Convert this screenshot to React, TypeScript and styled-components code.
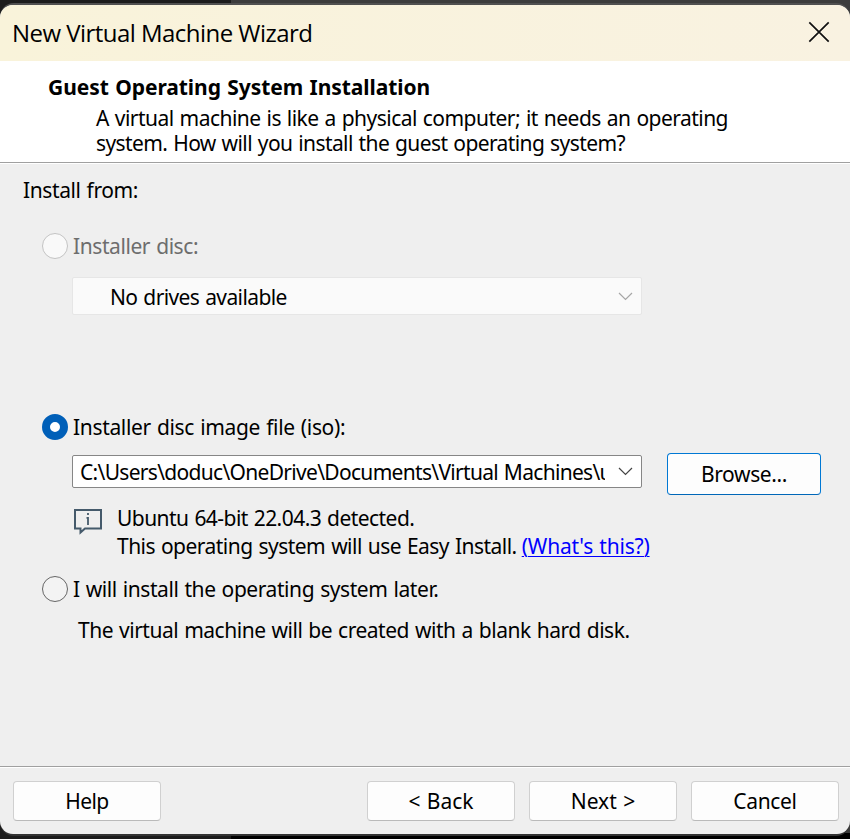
import React from "react";
import styled, { createGlobalStyle } from "styled-components";

const GlobalStyle = createGlobalStyle`
  * { box-sizing: border-box; }
  body { margin: 0; overflow: hidden; }
`;

const Desktop = styled.div`
  width: 850px;
  height: 839px;
  padding: 3px 0;
  background:
    linear-gradient(#000, #000) 231px 100% / 619px 6px no-repeat,
    linear-gradient(90deg, #1c1c1c 231px, #3c3c3c 231px);
`;

const Frame = styled.div`
  height: 833px;
  padding: 2px 0;
  background: linear-gradient(#505050, #333);
  border-radius: 14px;
`;

const Dialog = styled.div`
  height: 829px;
  display: flex;
  flex-direction: column;
  overflow: hidden;
  border-radius: 13px;
  background: #efefef;
  color: #000;
  font: 21px/24px "Noto Sans", sans-serif;
  word-spacing: 1px;
`;

const Label = styled.span<{ $ls?: number; $muted?: boolean }>`
  white-space: nowrap;
  letter-spacing: ${(p) => p.$ls ?? -0.5}px;
  color: ${(p) => (p.$muted ? "#6d6d6d" : "inherit")};
`;

const TitleBar = styled.header`
  height: 56px;
  flex: none;
  display: flex;
  justify-content: space-between;
  align-items: flex-start;
  padding: 12px 20px 0 12px;
  background: linear-gradient(90deg, #f9f3da, #f9f2e1);
`;

const Title = styled.h1`
  margin: 0;
  font: 400 24px/32px "Open Sans", sans-serif;
  letter-spacing: -0.54px;
  word-spacing: 0;
`;

const CloseButton = styled.button`
  border: 0;
  padding: 0;
  margin-top: 4px;
  background: none;
  line-height: 0;
`;

const Intro = styled.section`
  height: 103px;
  flex: none;
  padding: 14px 0 0 48px;
  background: #fff;
  border-bottom: 1px solid #fff;
  box-shadow: inset 0 -1px #a0a0a0;
`;

const Heading = styled.h2`
  margin: 0;
  font-size: 21px;
  line-height: 24px;
  letter-spacing: -0.06px;
`;

const Description = styled.p`
  margin: 7px 0 0 48px;
  line-height: 25px;
  display: flex;
  flex-direction: column;
`;

const Content = styled.main`
  flex: 1;
  padding: 14px 0 0 22px;
`;

const Lead = styled.div`
  height: 24px;
  padding-left: 1px;
`;

const Option = styled.label<{ $top: number }>`
  display: flex;
  align-items: center;
  gap: 5px;
  height: 26px;
  margin: ${(p) => p.$top}px 0 0 20px;
`;

const Radio = styled.span<{ $state: "off" | "on" | "disabled" }>`
  width: 26px;
  height: 26px;
  border-radius: 50%;
  ${(p) => p.$state === "on" && "border: 8px solid #005fb8; background: #fff;"}
  ${(p) => p.$state === "off" && "border: 1.5px solid #666; background: #f3f3f3;"}
  ${(p) => p.$state === "disabled" && "border: 1.5px solid #c3c3c3; background: #f9f9f9;"}
`;

const Indented = styled.div<{ $top: number }>`
  display: flex;
  align-items: flex-start;
  margin: ${(p) => p.$top}px 0 0 50px;
`;

const ComboBox = styled.div<{ $disabled?: boolean }>`
  width: 570px;
  height: ${(p) => (p.$disabled ? 38 : 33)}px;
  display: flex;
  align-items: center;
  justify-content: space-between;
  padding: 0 8px 0 ${(p) => (p.$disabled ? 37 : 7)}px;
  border: 1px solid ${(p) => (p.$disabled ? "#e6e6e6" : "#868686")};
  border-radius: 2px;
  background: ${(p) => (p.$disabled ? "#fafafa" : "#fff")};
`;

const DriveText = styled(Label)`
  padding-top: 2px;
`;

const PathText = styled.div`
  width: 525px;
  overflow: hidden;
  white-space: nowrap;
  letter-spacing: -0.69px;
`;

const Button = styled.button<{ $focus?: boolean; $ls?: number }>`
  width: ${(p) => (p.$focus ? 154 : 148)}px;
  height: ${(p) => (p.$focus ? 42 : 40)}px;
  padding: 0;
  font: inherit;
  color: inherit;
  letter-spacing: ${(p) => p.$ls ?? 0}px;
  word-spacing: 1px;
  background: #fdfdfd;
  border: 1px solid ${(p) => (p.$focus ? "#0078d4" : "#d0d0d0")};
  border-bottom-color: ${(p) => (p.$focus ? "#0067b8" : "#bababa")};
  border-radius: 4px;
`;

const BrowseButton = styled(Button)`
  margin: -2px 0 0 25px;
`;

const Notice = styled.div`
  display: flex;
  flex-direction: column;
  gap: 4px;
  margin-left: 15px;
`;

const Link = styled.a`
  color: #0000ff;
  letter-spacing: -0.2px;
  margin-left: 5px;
  text-decoration: underline;
  text-decoration-thickness: 1px;
  text-underline-offset: 2px;
`;

const Footer = styled.footer`
  height: 68px;
  flex: none;
  display: flex;
  gap: 14px;
  padding: 14px 11px 0 13px;
  border-top: 1px solid #a0a0a0;
  box-shadow: inset 0 1px #fff;
`;

const HelpButton = styled(Button)`
  margin-right: auto;
`;

const InfoIcon = styled.svg`
  margin: 3px 0 0 2px;
`;

const Chevron = ({ color }: { color: string }) => (
  <svg width="15" height="9" viewBox="0 0 15 9" fill="none" stroke={color} strokeWidth="1.2">
    <path d="M1 1l6.5 6.5L14 1" />
  </svg>
);

export default function App() {
  return (
    <Desktop>
      <GlobalStyle />
      <Frame>
        <Dialog>
          <TitleBar>
            <Title>New Virtual Machine Wizard</Title>
            <CloseButton aria-label="Close">
              <svg width="22" height="22" viewBox="0 0 22 22" fill="none" stroke="#111" strokeWidth="1.7">
                <path d="M1.3 1.3l19.4 19.4M20.7 1.3L1.3 20.7" />
              </svg>
            </CloseButton>
          </TitleBar>
          <Intro>
            <Heading>Guest Operating System Installation</Heading>
            <Description>
              <Label $ls={-0.53}>A virtual machine is like a physical computer; it needs an operating</Label>
              <Label $ls={-0.6}>system. How will you install the guest operating system?</Label>
            </Description>
          </Intro>
          <Content>
            <Lead>
              <Label $ls={-0.4}>Install from:</Label>
            </Lead>
            <Option $top={31}>
              <Radio $state="disabled" />
              <Label $ls={-0.42} $muted>Installer disc:</Label>
            </Option>
            <Indented $top={18}>
              <ComboBox $disabled>
                <DriveText $ls={-0.6}>No drives available</DriveText>
                <Chevron color="#a6a6a6" />
              </ComboBox>
            </Indented>
            <Option $top={99}>
              <Radio $state="on" />
              <Label $ls={-0.34}>Installer disc image file (iso):</Label>
            </Option>
            <Indented $top={15}>
              <ComboBox>
                <PathText>C:\Users\doduc\OneDrive\Documents\Virtual Machines\ubuntu</PathText>
                <Chevron color="#444" />
              </ComboBox>
              <BrowseButton $focus $ls={-0.38}>Browse...</BrowseButton>
            </Indented>
            <Indented $top={11}>
              <InfoIcon width="28" height="27" viewBox="0 0 28 27" fill="none" stroke="#455a6b" strokeWidth="2">
                <path d="M1 1h26v18.5H11l-4.5 4V19.5H1z" />
                <path d="M14 4v2M12.5 8.8H14V16" strokeWidth="1.8" />
              </InfoIcon>
              <Notice>
                <Label $ls={-0.55}>Ubuntu 64-bit 22.04.3 detected.</Label>
                <Label $ls={-0.53}>
                  This operating system will use Easy Install.<Link>(What's this?)</Link>
                </Label>
              </Notice>
            </Indented>
            <Option $top={18}>
              <Radio $state="off" />
              <Label $ls={-0.43}>I will install the operating system later.</Label>
            </Option>
            <Indented $top={16}>
              <Label $ls={-0.48}>&nbsp;The virtual machine will be created with a blank hard disk.</Label>
            </Indented>
          </Content>
          <Footer>
            <HelpButton $ls={-0.6}>Help</HelpButton>
            <Button>&lt; Back</Button>
            <Button>Next &gt;</Button>
            <Button $ls={-0.35}>Cancel</Button>
          </Footer>
        </Dialog>
      </Frame>
    </Desktop>
  );
}
